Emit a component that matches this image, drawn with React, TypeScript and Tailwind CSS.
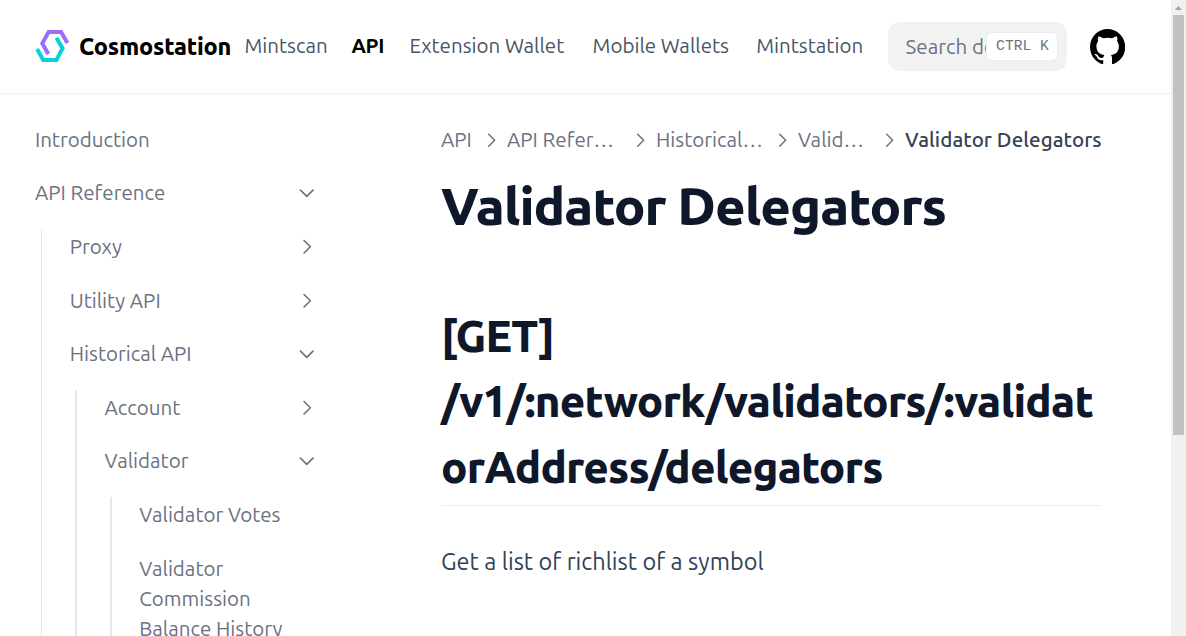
import type { ReactNode } from "react";

function Chevron({ className }: { className: string }) {
  return (
    <svg viewBox="0 0 24 24" fill="none" stroke="currentColor" strokeWidth="1.8" strokeLinecap="round" strokeLinejoin="round" className={className}>
      <path d="M9 5l7 7-7 7" />
    </svg>
  );
}

function Logo() {
  return (
    <svg viewBox="0 0 35 32" fill="none" strokeWidth="4" className="h-8 w-[35px] shrink-0">
      <path d="M13.3 24 L7.3 13.4 L13.6 2 H26.1 L32.4 13" stroke="#9C6CFF" />
      <path d="M21.4 7.8 L27.6 18.4 L21.4 30 H8.2 L2.1 19" stroke="#05D2DD" />
    </svg>
  );
}

function NavLink({ children, className = "" }: { children: ReactNode; className?: string }) {
  return <a className={"whitespace-nowrap text-[20.53px] leading-[30px] " + className}>{children}</a>;
}

function Header() {
  return (
    <header className="z-10 flex h-[93px] shrink-0 items-center bg-white pl-[35px] shadow-[0_2px_4px_rgba(0,0,0,.02),0_1px_0_rgba(0,0,0,.06)]">
      <a className="mb-[1.5px] flex w-[209.5px] shrink-0 items-center gap-[9px]">
        <Logo />
        <span className="text-[23.47px] leading-8 font-extrabold tracking-[-0.2px] text-black">Cosmostation</span>
      </a>
      <nav className="mb-[2px] flex w-[643.5px] shrink-0 items-center text-gray-600">
        <NavLink className="w-[107px]">Mintscan</NavLink>
        <NavLink className="w-[58px] font-semibold tracking-[-0.3px] text-black">API</NavLink>
        <NavLink className="w-[183.1px]">Extension Wallet</NavLink>
        <NavLink className="w-[163.7px]">Mobile Wallets</NavLink>
        <NavLink>Mintstation</NavLink>
      </nav>
      <div className="flex h-[49px] w-[179px] shrink-0 items-center rounded-xl bg-[#f2f2f2] pl-[17.6px]">
        <span className="w-[80.4px] shrink-0 overflow-hidden text-[20.53px] leading-[30px] whitespace-nowrap text-gray-500">Search documentation…</span>
        <kbd className="flex h-[29px] w-[72px] shrink-0 items-center justify-center rounded-md border border-gray-200/80 bg-white pb-0.5 pl-px font-['Liberation_Mono',monospace] text-[14.67px] whitespace-pre text-gray-500">
          CTRL K
        </kbd>
      </div>
      <a className="ml-[23px] text-black">
        <svg viewBox="3 3 18 18" fill="currentColor" className="size-[35.2px]">
          <path d="M12 3C7.0275 3 3 7.12937 3 12.2276C3 16.3109 5.57625 19.7597 9.15374 20.9824C9.60374 21.0631 9.77249 20.7863 9.77249 20.5441C9.77249 20.3249 9.76125 19.5982 9.76125 18.8254C7.5 19.2522 6.915 18.2602 6.735 17.7412C6.63375 17.4759 6.19499 16.6569 5.8125 16.4378C5.4975 16.2647 5.0475 15.838 5.80124 15.8264C6.51 15.8149 7.01625 16.4954 7.18499 16.7723C7.99499 18.1679 9.28875 17.7758 9.80625 17.5335C9.885 16.9337 10.1212 16.53 10.38 16.2993C8.3775 16.0687 6.285 15.2728 6.285 11.7432C6.285 10.7397 6.63375 9.9092 7.20749 9.26326C7.1175 9.03257 6.8025 8.08674 7.2975 6.81794C7.2975 6.81794 8.05125 6.57571 9.77249 7.76377C10.4925 7.55615 11.2575 7.45234 12.0225 7.45234C12.7875 7.45234 13.5525 7.55615 14.2725 7.76377C15.9937 6.56418 16.7475 6.81794 16.7475 6.81794C17.2424 8.08674 16.9275 9.03257 16.8375 9.26326C17.4113 9.9092 17.76 10.7281 17.76 11.7432C17.76 15.2843 15.6563 16.0687 13.6537 16.2993C13.98 16.5877 14.2613 17.1414 14.2613 18.0065C14.2613 19.2407 14.25 20.2326 14.25 20.5441C14.25 20.7863 14.4188 21.0746 14.8688 20.9824C16.6554 20.364 18.2079 19.1866 19.3078 17.6162C20.4077 16.0457 20.9995 14.1611 21 12.2276C21 7.12937 16.9725 3 12 3Z" />
        </svg>
      </a>
    </header>
  );
}

function Item({ label, state }: { label: string; state?: "open" | "closed" }) {
  return (
    <div className="flex items-center justify-between py-[8.8px] text-[20.53px] leading-[30px] text-gray-500">
      <span>{label}</span>
      {state && <Chevron className={state === "open" ? "mb-px size-[21.5px] shrink-0 rotate-90" : "size-[21.5px] shrink-0"} />}
    </div>
  );
}

function Branch({ children, thick = false }: { children: ReactNode; thick?: boolean }) {
  return (
    <div className={thick ? "flex pl-[5.5px]" : "flex pl-1.5"}>
      <div className={thick ? "mt-1.5 w-[2px] shrink-0 bg-gray-200" : "mt-1.5 mr-px w-px shrink-0 bg-gray-200"} />
      <div className={thick ? "flex flex-1 flex-col gap-[6px] pl-[27.3px]" : "flex flex-1 flex-col gap-[6px] pl-[26.8px]"}>{children}</div>
    </div>
  );
}

function Sidebar() {
  return (
    <aside className="h-full w-[317px] shrink-0 overflow-hidden pt-[23.1px] pl-[34.9px]">
      <div className="flex flex-col gap-[6px]">
        <Item label="Introduction" />
        <Item label="API Reference" state="open" />
        <Branch>
          <Item label="Proxy" state="closed" />
          <Item label="Utility API" state="closed" />
          <Item label="Historical API" state="open" />
          <Branch thick>
            <Item label="Account" state="closed" />
            <Item label="Validator" state="open" />
            <Branch thick>
              <Item label="Validator Votes" />
              <Item label="Validator Commission Balance History" />
            </Branch>
          </Branch>
        </Branch>
      </div>
    </aside>
  );
}

function Breadcrumb() {
  const arrow = "size-[20.5px] shrink-0";
  return (
    <div className="flex items-center gap-[5.87px] text-[20.53px] leading-[30px] text-gray-500">
      <span className="w-[33.8px] shrink-0">API</span>
      <Chevron className={arrow} />
      <span className="w-[116.8px] shrink-0 truncate">API Reference</span>
      <Chevron className={arrow} />
      <span className="w-[109.7px] shrink-0 truncate">Historical API</span>
      <Chevron className={arrow} />
      <span className="w-[74.8px] shrink-0 truncate">Validator</span>
      <Chevron className={arrow} />
      <span className="font-medium tracking-[0.08px] whitespace-nowrap text-gray-700">Validator Delegators</span>
    </div>
  );
}

function Article() {
  return (
    <main className="ml-[124px] w-[660px] shrink-0 pt-8">
      <Breadcrumb />
      <h1 className="mt-[18px] text-[52.5px] leading-[66px] font-extrabold tracking-[-0.0187em] text-slate-900">Validator Delegators</h1>
      <h2 className="mt-[63.5px] border-b border-neutral-200/70 pb-[5.5px] text-[43.8px] leading-[65.6px] font-extrabold tracking-[-0.0184em] wrap-anywhere text-slate-900">
        [GET]
        <br />
        /v1/:network/validators/:validatorAddress/delegators
      </h2>
      <p className="mt-[35px] text-[23.47px] leading-[41px] tracking-[0.03px] text-slate-700">Get a list of richlist of a symbol</p>
    </main>
  );
}

function Scrollbar() {
  return (
    <div className="flex w-[15px] shrink-0 flex-col items-center bg-[#f1f1f1]">
      <svg viewBox="0 0 15 15" className="size-[15px]" fill="#a3a3a3">
        <path d="M7.5 6 L11 10 H4 Z" />
      </svg>
      <div className="h-[420px] w-[11px] bg-[#c1c1c1]" />
    </div>
  );
}

export default function App() {
  return (
    <div className="flex h-[636px] w-[1186px] overflow-hidden bg-white font-['Ubuntu','Noto_Sans',sans-serif]">
      <div className="flex min-w-0 flex-1 flex-col overflow-hidden">
        <Header />
        <div className="flex min-h-0 flex-1">
          <Sidebar />
          <Article />
        </div>
      </div>
      <Scrollbar />
    </div>
  );
}
